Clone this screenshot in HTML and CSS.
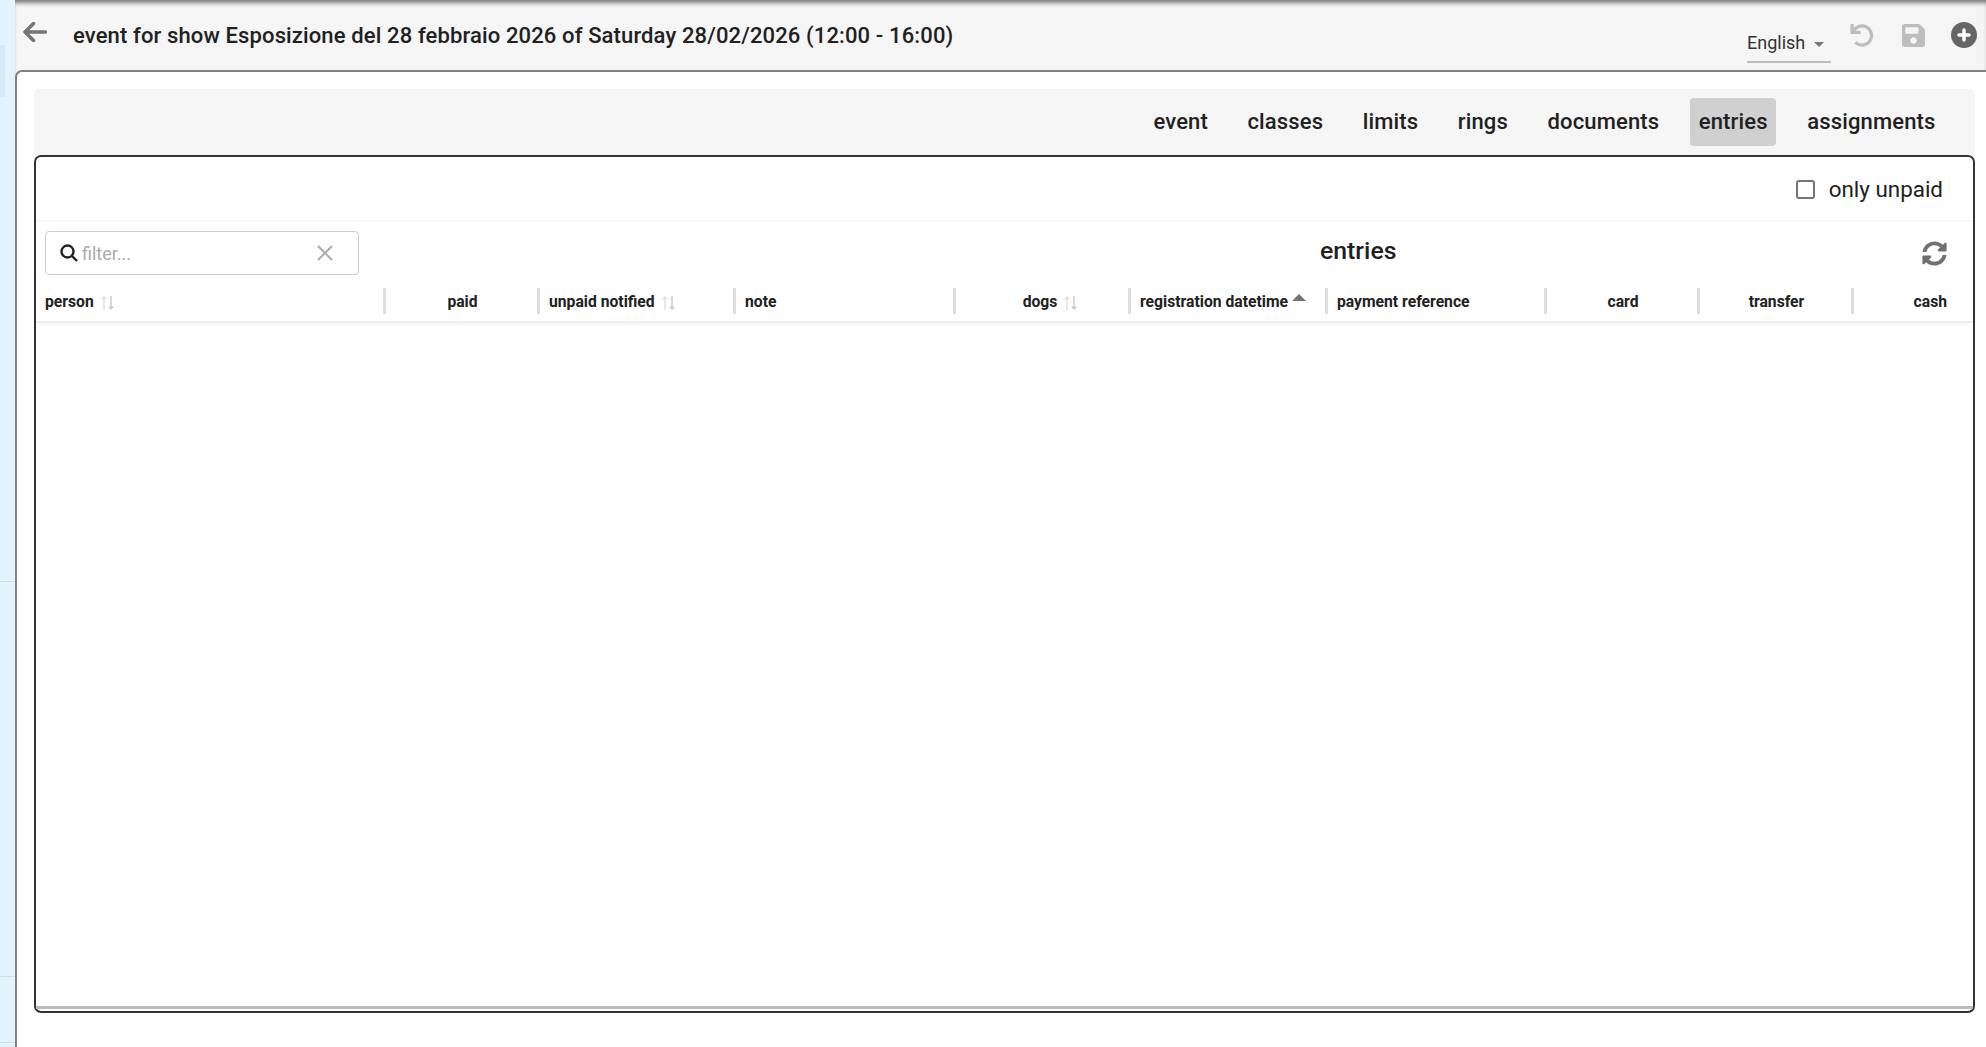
FILE: index.html
```html
<!DOCTYPE html>
<html lang="en">
<head>
  <meta charset="UTF-8">
  <title>entries</title>
  <link rel="stylesheet" href="styles.css">
</head>
<body>
  <aside class="side">
    <div class="side-top"><div class="side-mark"></div></div>
    <div class="side-item side-a"></div>
    <div class="side-item side-b"></div>
    <div class="side-item"></div>
  </aside>
  <div class="page">
    <header class="topbar">
      <svg class="back-icon" viewBox="0 0 24 20"><path d="M22.5 10H2M10.5 1.5 2 10l8.5 8.5"/></svg>
      <h1 class="page-title">event for show Esposizione del 28 febbraio 2026 of Saturday 28/02/2026 (12:00 - 16:00)</h1>
      <div class="lang"><span>English</span><i class="lang-caret"></i></div>
      <svg class="undo-icon" viewBox="0 0 512 512"><path d="M212.333 224.333H12c-6.627 0-12-5.373-12-12V12C0 5.373 5.373 0 12 0h48c6.627 0 12 5.373 12 12v78.112C117.773 39.279 184.26 7.47 258.175 8.007c136.906.994 246.448 111.623 246.157 248.532C504.041 393.258 393.12 504 256.333 504c-64.089 0-122.496-24.313-166.51-64.215-5.099-4.622-5.334-12.554-.467-17.42l33.967-33.967c4.474-4.474 11.662-4.717 16.401-.525C170.76 415.336 211.58 432 256.333 432c97.268 0 176-78.716 176-176 0-97.267-78.716-176-176-176-58.496 0-110.28 28.476-142.274 72.333h98.274c6.627 0 12 5.373 12 12v48c0 6.627-5.373 12-12 12z"/></svg>
      <svg class="save-icon" viewBox="0 32 448 448"><path d="M433.941 129.941l-83.882-83.882A48 48 0 0 0 316.118 32H48C21.49 32 0 53.49 0 80v352c0 26.51 21.49 48 48 48h352c26.51 0 48-21.49 48-48V163.882a48 48 0 0 0-14.059-33.941zM224 416c-35.346 0-64-28.654-64-64 0-35.346 28.654-64 64-64s64 28.654 64 64c0 35.346-28.654 64-64 64zm96-304.52V212c0 6.627-5.373 12-12 12H76c-6.627 0-12-5.373-12-12V108c0-6.627 5.373-12 12-12h228.52c3.183 0 6.235 1.264 8.485 3.515l3.48 3.48A11.996 11.996 0 0 1 320 111.48z"/></svg>
      <svg class="add-icon" viewBox="0 0 26 26"><circle cx="13" cy="13" r="13"/><path d="M13 8v10M8 13h10"/></svg>
    </header>

    <main class="content">
      <nav class="tabs">
        <a class="tab">event</a>
        <a class="tab">classes</a>
        <a class="tab">limits</a>
        <a class="tab">rings</a>
        <a class="tab">documents</a>
        <a class="tab active">entries</a>
        <a class="tab">assignments</a>
      </nav>

      <section class="panel">
        <div class="options">
          <span class="checkbox"></span>
          <span class="options-label">only unpaid</span>
        </div>

        <div class="toolbar">
          <div class="filter">
            <svg class="search-icon" viewBox="0 0 18 18"><circle cx="7.5" cy="7.5" r="6"/><path d="M12 12l5 5"/></svg>
            <span class="filter-text">filter...</span>
            <svg class="clear-icon" viewBox="0 0 16 16"><path d="M1 1l14 14M15 1 1 15"/></svg>
          </div>
          <h2 class="table-title">entries</h2>
          <svg class="sync-icon" viewBox="0 0 512 512"><path d="M370.72 133.28C339.458 104.008 298.888 87.962 255.848 88c-77.458.068-144.328 53.178-162.791 126.85-1.344 5.363-6.122 9.15-11.651 9.15H24.103c-7.498 0-13.194-6.807-11.807-14.176C33.933 94.924 134.813 8 256 8c66.448 0 126.791 26.136 171.315 68.685L463.03 40.97C478.149 25.851 504 36.559 504 57.941V192c0 13.255-10.745 24-24 24H345.941c-21.382 0-32.09-25.851-16.971-40.971l41.75-41.749zM32 296h134.059c21.382 0 32.09 25.851 16.971 40.971l-41.75 41.75c31.262 29.273 71.835 45.319 114.876 45.28 77.418-.07 144.315-53.144 162.787-126.849 1.344-5.363 6.122-9.15 11.651-9.15h57.304c7.498 0 13.194 6.807 11.807 14.176C478.067 417.076 377.187 504 256 504c-66.448 0-126.791-26.136-171.315-68.685L48.97 471.03C33.851 486.149 8 475.441 8 454.059V320c0-13.255 10.745-24 24-24z"/></svg>
        </div>

        <div class="thead">
          <div class="th">person<svg class="sort-icon" viewBox="0 0 13 14"><path class="up" d="M3 14V1M.8 3.4 3 1l2.2 2.4"/><path class="down" d="M10 0v13M7.8 10.6 10 13l2.2-2.4"/></svg></div>
          <div class="th center">paid</div>
          <div class="th">unpaid notified<svg class="sort-icon" viewBox="0 0 13 14"><path class="up" d="M3 14V1M.8 3.4 3 1l2.2 2.4"/><path class="down" d="M10 0v13M7.8 10.6 10 13l2.2-2.4"/></svg></div>
          <div class="th">note</div>
          <div class="th center dogs">dogs<svg class="sort-icon" viewBox="0 0 13 14"><path class="up" d="M3 14V1M.8 3.4 3 1l2.2 2.4"/><path class="down" d="M10 0v13M7.8 10.6 10 13l2.2-2.4"/></svg></div>
          <div class="th">registration datetime<i class="sort-caret"></i></div>
          <div class="th">payment reference</div>
          <div class="th center">card</div>
          <div class="th center">transfer</div>
          <div class="th last">cash</div>
        </div>

        <div class="tbody"></div>
      </section>
    </main>
  </div>
</body>
</html>
```

FILE: styles.css
```css
/* General Styles */
html, body {
  height: 100%;
}

body {
  margin: 0;
  display: flex;
  overflow: hidden;
  font-family: 'Roboto', sans-serif;
  color: #212121;
  background: #fff;
}

/* Left strip */
.side {
  width: 15px;
  flex: none;
  background: #e3f2fd;
}

.side-top {
  height: 97px;
  padding-top: 45px;
  box-sizing: border-box;
}

.side-mark {
  width: 5px;
  height: 52px;
  background: #d8e8f4;
}

.side-item {
  border-bottom: 1px solid #cfdde8;
}

.side-a {
  height: 484px;
}

.side-b {
  height: 394px;
}

.side-item:last-child {
  height: 65px;
}

/* Header */
.page {
  flex: 1;
  min-width: 0;
  display: flex;
  flex-direction: column;
  background: #f5f5f5;
  box-shadow: inset 0 5px 4px -2px rgba(0, 0, 0, 0.5);
}

.topbar {
  height: 70px;
  flex: none;
  display: flex;
  align-items: flex-start;
  box-sizing: border-box;
  padding-left: 8px;
}

.back-icon {
  width: 24px;
  height: 20px;
  margin-top: 22px;
  fill: none;
  stroke: #757575;
  stroke-width: 3.5;
  stroke-linecap: round;
  stroke-linejoin: round;
}

.page-title {
  margin: 22px 0 0 26px;
  font-size: 22px;
  letter-spacing: 0.13px;
  line-height: 28px;
  font-weight: 500;
  flex: 1;
  white-space: nowrap;
}

.lang {
  width: 84px;
  height: 32px;
  margin-top: 29px;
  border-bottom: 2px solid #bdbdbd;
  font-size: 18px;
  line-height: 28px;
  display: flex;
  align-items: flex-start;
  color: #333;
}

.lang-caret {
  margin-left: 9px;
  margin-top: 13px;
  border-left: 5px solid transparent;
  border-right: 5px solid transparent;
  border-top: 5px solid #757575;
}

.undo-icon {
  width: 24px;
  height: 23px;
  margin: 24px 0 0 19px;
  fill: #bdbdbd;
}

.save-icon {
  width: 23px;
  height: 23px;
  margin: 24px 0 0 28px;
  fill: #bdbdbd;
}

.add-icon {
  width: 26px;
  height: 26px;
  margin: 22px 9px 0 26px;
}

.add-icon circle {
  fill: #666;
}

.add-icon path {
  fill: none;
  stroke: #fff;
  stroke-width: 3.5;
  stroke-linecap: round;
}

/* Content */
.content {
  flex: 1;
  min-height: 0;
  margin-right: -20px;
  padding: 17px 31px 34px 17px;
  background: #fff;
  border-top: 2px solid #808080;
  border-left: 2px solid #808080;
  border-top-left-radius: 7px;
  display: flex;
  flex-direction: column;
}

.tabs {
  height: 66px;
  flex: none;
  padding: 9px 31px 0 0;
  box-sizing: border-box;
  background: #f5f5f5;
  border-radius: 5px 5px 0 0;
  display: flex;
  justify-content: flex-end;
  align-items: flex-start;
  gap: 22.5px;
}

.tab {
  height: 48px;
  padding: 0 8.5px;
  font-size: 22px;
  letter-spacing: 0.15px;
  font-weight: 500;
  line-height: 48px;
  border-radius: 4px;
}

.tab.active {
  background: #d0d0d0;
}

.panel {
  flex: 1;
  min-height: 0;
  border: 2px solid #333;
  border-radius: 7px;
  display: flex;
  flex-direction: column;
  background: #fff;
}

.options {
  height: 63px;
  flex: none;
  border-bottom: 2px solid #f7f7f7;
  display: flex;
  align-items: center;
  justify-content: flex-end;
  padding-right: 30px;
}

.checkbox {
  width: 15px;
  height: 15px;
  margin-top: 2px;
  border: 2px solid #757575;
  border-radius: 3px;
}

.options-label {
  margin-left: 14px;
  font-size: 22.4px;
  font-weight: 400;
  color: #212121;
}

.toolbar {
  height: 53px;
  flex: none;
  box-sizing: border-box;
  padding: 9px 26px 0 9px;
  display: flex;
  align-items: flex-start;
}

.filter {
  width: 314px;
  height: 44px;
  flex: none;
  box-sizing: border-box;
  border: 1px solid #ccc;
  border-radius: 4px;
  display: flex;
  align-items: center;
  padding: 0 25px 0 14px;
}

.search-icon {
  width: 18px;
  height: 18px;
  flex: none;
  fill: none;
  stroke: #222;
  stroke-width: 2.4;
}

.filter-text {
  flex: 1;
  margin-left: 4px;
  font-size: 18px;
  color: #aaa;
}

.clear-icon {
  width: 16px;
  height: 16px;
  flex: none;
  fill: none;
  stroke: #aaa;
  stroke-width: 2;
}

.table-title {
  flex: 1;
  margin: 2px 0 0 961px;
  font-size: 24.8px;
  line-height: 36px;
  font-weight: 500;
}

.sync-icon {
  width: 25px;
  height: 25px;
  margin-top: 10px;
  fill: #707070;
}

/* Table header */
.thead {
  height: 40px;
  padding-top: 6px;
  flex: none;
  display: grid;
  grid-template-columns: 350px 154px 196px 220px 175px 197px 219px 153px 154px 1fr;
  align-items: center;
  border-bottom: 2px solid #eee;
  box-shadow: 0 2px 4px rgba(0, 0, 0, 0.04);
}

.th {
  height: 26px;
  line-height: 27px;
  box-sizing: border-box;
  padding-left: 9px;
  border-right: 3px solid #ddd;
  font-size: 15.7px;
  font-weight: 700;
  white-space: nowrap;
}

.th.center {
  text-align: center;
  padding-left: 2px;
}

.th.dogs {
  padding-left: 16px;
}

.th.last {
  border-right: none;
  text-align: right;
  padding-right: 26px;
}

.sort-icon {
  width: 13px;
  height: 14px;
  margin-left: 7px;
  vertical-align: -3px;
  fill: none;
  stroke-width: 1.5;
}

.sort-icon .up {
  stroke: #e0e0e0;
}

.sort-icon .down {
  stroke: #ccc;
}

.sort-caret {
  display: inline-block;
  margin-left: 4px;
  vertical-align: 6px;
  border-left: 7px solid transparent;
  border-right: 7px solid transparent;
  border-bottom: 7px solid #757575;
}

.tbody {
  flex: 1;
  min-height: 0;
  margin-bottom: 2px;
  border-bottom: 3px solid #bbb;
}
```
